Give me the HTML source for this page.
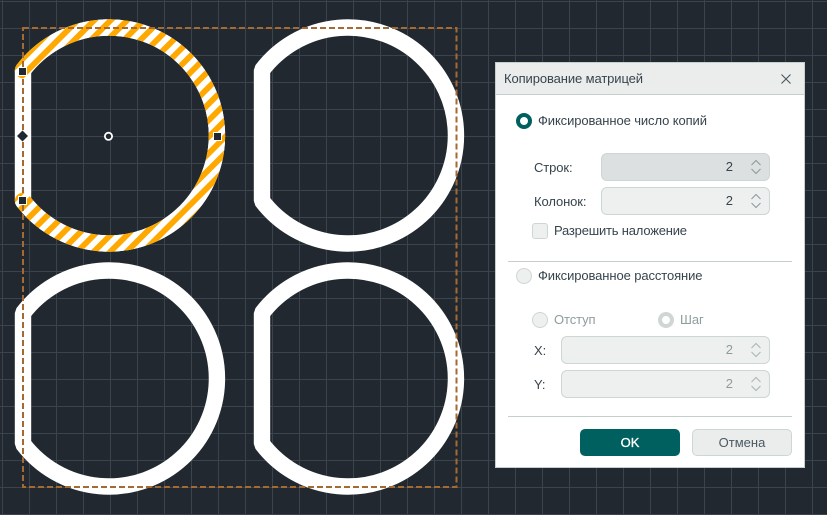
<!DOCTYPE html>
<html lang="ru"><head><meta charset="utf-8"><title>Копирование матрицей</title>
<style>
html,body{margin:0;padding:0;width:827px;height:515px;overflow:hidden;background:#212830}
body{position:relative;font-family:"Liberation Sans","DejaVu Sans",sans-serif;font-size:13px;color:#37444c}
svg.c{position:absolute;left:0;top:0}
.d{position:absolute;left:495px;top:62px;width:308px;height:404px;background:#fff;border:1px solid #c5d0ce}
.a{position:absolute;box-sizing:border-box}
.t{position:absolute;white-space:nowrap;line-height:16px;letter-spacing:-.1px}
.g{color:#8d9c9d}
.i{position:absolute;box-sizing:border-box;background:#eef0ef;border:1px solid #ccd6d3;border-radius:6px}
.r{position:absolute;box-sizing:border-box;width:16px;height:16px;border-radius:50%;background:#eef0ef;border:1px solid #ccd6d3}
.s{position:absolute;left:0;width:14px;height:18px}
</style></head><body>
<svg class="c" width="827" height="515" viewBox="0 0 827 515">
<defs>
<pattern id="h" x="8" y="0" width="11.67" height="11.67" patternUnits="userSpaceOnUse" patternTransform="rotate(45)">
<rect width="11.67" height="11.67" fill="#fff"/><rect width="5.83" height="11.67" fill="#ffa800"/>
</pattern>
<pattern id="gr" width="27" height="27" patternUnits="userSpaceOnUse" x="2" y="1">
<path d="M.5 0V27M0 .5H27" stroke="#3b434d" stroke-width="1" fill="none"/>
</pattern>
<path id="ring" d="M23 70.100A108 108 0 1 1 23 200.900Z" fill="none" stroke="#fff" stroke-width="16.400" stroke-linejoin="bevel"/>
</defs>
<rect width="827" height="515" fill="url(#gr)"/>
<use href="#ring"/>
<use href="#ring" x="239"/>
<use href="#ring" y="243"/>
<use href="#ring" x="239" y="243"/>
<path d="M23 70.100A108 108 0 1 1 23 200.900" fill="none" stroke="url(#h)" stroke-width="16.400" stroke-linecap="round"/>
<rect x="23" y="28" width="433.500" height="459" fill="none" stroke="#a56a32" stroke-width="2" stroke-dasharray="6 3"/>
<g fill="#212830" stroke="#fff" stroke-width="1">
<rect x="18.500" y="67.500" width="8" height="8"/>
<rect x="18.500" y="196.500" width="8" height="8"/>
<rect x="213.500" y="132.500" width="8" height="8"/>
<path d="M22.500 130.500L28 136L22.500 141.500L17 136Z" stroke="none"/>
<circle cx="108.500" cy="136.300" r="3.600" stroke-width="1.800"/>
</g>
</svg>
<div class="d">
<div class="a" style="left:0;top:0;width:308px;height:32px;background:#ebeded;border-bottom:1px solid #c5d0ce"></div>
<div class="t" style="left:8px;top:8px">Копирование матрицей</div>
<svg class="a" style="left:284px;top:10px" width="12" height="12" viewBox="0 0 12 12"><path d="M1.500 1.500L10.500 10.500M10.500 1.500L1.500 10.500" stroke="#4a565c" stroke-width="1.100" fill="none"/></svg>

<div class="a" style="left:20px;top:50px;width:16px;height:16px;border-radius:50%;border:4.500px solid #005f5f;background:#fff"></div>
<div class="t" style="left:42px;top:50px">Фиксированное число копий</div>

<div class="t" style="left:38px;top:97px">Строк:</div>
<div class="i" style="left:105px;top:90px;width:169px;height:28px;background:#dce0e0"><div class="t" style="right:36px;top:5px;letter-spacing:0">2</div>
<svg class="s" style="left:147px;top:4px" viewBox="0 0 14 18"><path d="M2.500 7L7 2.500L11.500 7M2.500 11L7 15.500L11.500 11" stroke="#8c989a" stroke-width="1" fill="none"/></svg></div>
<div class="t" style="left:38px;top:131px">Колонок:</div>
<div class="i" style="left:105px;top:124px;width:169px;height:28px"><div class="t" style="right:36px;top:5px;letter-spacing:0">2</div>
<svg class="s" style="left:147px;top:4px" viewBox="0 0 14 18"><path d="M2.500 7L7 2.500L11.500 7M2.500 11L7 15.500L11.500 11" stroke="#8c989a" stroke-width="1" fill="none"/></svg></div>
<div class="a" style="left:36px;top:160px;width:16px;height:16px;background:#eef0ef;border:1px solid #ccd6d3;border-radius:3px"></div>
<div class="t" style="left:58px;top:160px;letter-spacing:-.2px">Разрешить наложение</div>

<div class="a" style="left:12px;top:198px;width:284px;height:1px;background:#c5d0ce"></div>
<div class="r" style="left:20px;top:205px"></div>
<div class="t" style="left:42px;top:205px">Фиксированное расстояние</div>

<div class="r" style="left:36px;top:249px"></div>
<div class="t g" style="left:58px;top:249px">Отступ</div>
<div class="a" style="left:162px;top:249px;width:16px;height:16px;border-radius:50%;border:4.500px solid #cfd6d4;background:#fff"></div>
<div class="t g" style="left:184px;top:249px">Шаг</div>

<div class="t" style="left:38px;top:280px">X:</div>
<div class="i" style="left:65px;top:273px;width:209px;height:28px"><div class="t g" style="right:36px;top:5px;letter-spacing:0">2</div>
<svg class="s" style="left:187px;top:4px" viewBox="0 0 14 18"><path d="M2.500 7L7 2.500L11.500 7M2.500 11L7 15.500L11.500 11" stroke="#a9b4b5" stroke-width="1" fill="none"/></svg></div>
<div class="t" style="left:38px;top:314px">Y:</div>
<div class="i" style="left:65px;top:307px;width:209px;height:28px"><div class="t g" style="right:36px;top:5px;letter-spacing:0">2</div>
<svg class="s" style="left:187px;top:4px" viewBox="0 0 14 18"><path d="M2.500 7L7 2.500L11.500 7M2.500 11L7 15.500L11.500 11" stroke="#a9b4b5" stroke-width="1" fill="none"/></svg></div>

<div class="a" style="left:12px;top:353px;width:284px;height:1px;background:#c5d0ce"></div>
<div class="a" style="left:84px;top:366px;width:100px;height:27px;background:#005f5f;border-radius:5px;color:#fff;font-size:13px;-webkit-text-stroke:.3px #fff;text-align:center;line-height:27px">OK</div>
<div class="a" style="left:196px;top:366px;width:100px;height:27px;background:#ebeded;border:1px solid #ccd6d3;border-radius:5px;color:#4a5a60;text-align:center;line-height:25px">Отмена</div>
</div>
</body></html>
